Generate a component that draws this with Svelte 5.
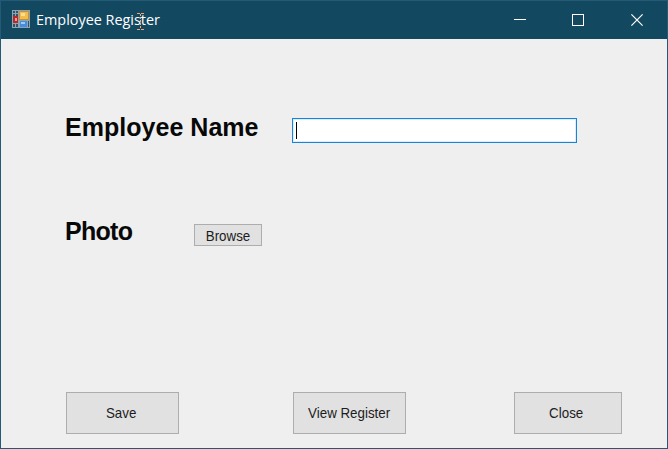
<script>
  let name = $state('');
</script>

<div class="window">
  <header>
    <svg class="appicon" width="18" height="18" viewBox="0 0 18 18" shape-rendering="crispEdges">
      <rect width="18" height="18" fill="#8fa3b0" />
      <rect x="1" y="1" width="5" height="5" fill="#31536b" />
      <rect x="3" y="1" width="1" height="5" fill="#8fa3b0" />
      <rect x="1" y="3" width="5" height="1" fill="#8fa3b0" />
      <rect x="7" y="1" width="10" height="9" fill="#c98f35" />
      <rect x="8" y="2" width="8" height="7" fill="#f3bd4c" />
      <rect x="9" y="3" width="4" height="3" fill="#fbdc94" />
      <rect x="1" y="6" width="5" height="7" fill="#b32a2c" />
      <rect x="3" y="8" width="2" height="3" fill="#ee9a92" />
      <rect x="1" y="14" width="5" height="3" fill="#31536b" />
      <rect x="3" y="14" width="1" height="3" fill="#8fa3b0" />
      <rect x="8" y="11" width="7" height="6" fill="#418fe3" />
      <rect x="9" y="12" width="4" height="2" fill="#9ccbfa" />
      <rect x="16" y="11" width="1" height="6" fill="#31536b" />
    </svg>
    <div class="title">
      <span>Employee Register</span>
      <svg class="cursor" width="9" height="17" viewBox="0 0 9 17" fill="none">
        <g stroke="#f0a878">
          <path d="M1 .5H4M5 .5H8M1 16.5H4M5 16.5H8" />
          <path d="M4.5 1V16" stroke-dasharray="2 1" />
        </g>
      </svg>
    </div>
    <div class="controls">
      <svg width="12" height="12" viewBox="0 0 12 12" stroke="#fff"><path d="M0 5.5H12" /></svg>
      <svg width="12" height="12" viewBox="0 0 12 12" stroke="#fff" fill="none"><rect x=".5" y=".5" width="11" height="11" /></svg>
      <svg width="12" height="12" viewBox="0 0 12 12" stroke="#fff" stroke-width="1.2"><path d="M.4 .4L11.6 11.6M11.6 .4L.4 11.6" /></svg>
    </div>
  </header>
  <main>
    <div class="row name">
      <label for="employee">Employee Name</label>
      <div class="field">
        <i class="caret"></i>
        <input id="employee" bind:value={name} />
      </div>
    </div>
    <div class="row photo">
      <span class="label">Photo</span>
      <button class="browse"><span>Browse</span></button>
    </div>
    <div class="row actions">
      <button class="save"><span>Save</span></button>
      <button class="view"><span>View Register</span></button>
      <button class="close"><span>Close</span></button>
    </div>
  </main>
</div>

<style>
  :global(body) { margin: 0; overflow: hidden; }
  .window {
    width: 668px; height: 449px; box-sizing: border-box;
    border: 1px solid #245a75; background: #efefef;
    display: flex; flex-direction: column;
    font-family: "Liberation Sans", Arial, sans-serif;
  }
  header {
    height: 38px; flex: none; box-sizing: border-box; background: #134861;
    display: flex; align-items: center; padding: 0 24px 0 11px;
  }
  .appicon { display: block; margin-top: -2px; }
  .title {
    position: relative; margin-left: 6px; height: 38px; line-height: 37px;
    font-family: "Open Sans", "Noto Sans", sans-serif; font-size: 15px; color: #fff; white-space: nowrap;
  }
  .title span { display: inline-block; transform: scaleX(.96); transform-origin: left; }
  .cursor { position: absolute; left: 100px; top: 12px; }
  .controls { margin-left: auto; display: flex; gap: 47px; }
  .controls svg { display: block; }
  .controls svg:first-child { margin-right: -1px; }
  main { flex: 1; display: flex; flex-direction: column; }
  .row { display: flex; align-items: flex-start; }
  .name { padding: 79px 0 0 64px; height: 25px; }
  label, .label { font-weight: bold; font-size: 25px; line-height: 28px; color: #080808; white-space: nowrap; }
  label { width: 227px; margin-top: -5px; letter-spacing: .03px; }
  .field {
    width: 285px; height: 25px; box-sizing: border-box; display: flex; align-items: flex-start;
    border: 1px solid #1684d8; background: #fff; padding: 3px;
    box-shadow: inset 0 0 0 1px #dceefa;
  }
  .caret { width: 1px; height: 17px; background: #000; flex: none; }
  input { flex: 1; min-width: 0; height: 17px; padding: 0; border: 0; outline: 0; background: transparent; }
  .photo { padding: 81px 0 0 64px; height: 22px; }
  .label { width: 129px; margin-top: -7px; letter-spacing: -.7px; }
  button {
    box-sizing: border-box; border: 1px solid #adadad; border-radius: 0; background: #e1e1e1; padding: 0;
    display: flex; align-items: center; justify-content: center;
    font: 15px "Liberation Sans", Arial, sans-serif; color: #1c1c22;
  }
  button span { display: block; white-space: nowrap; transform: scaleX(.89); margin-top: -1px; }
  .browse { width: 68px; height: 22px; }
  .browse span { margin: 1px 0 0; }
  .actions { margin-top: auto; padding: 0 45px 14px 65px; }
  .actions button { height: 42px; }
  .save { width: 113px; }
  .save span { margin-left: -2px; }
  .view { width: 113px; margin-left: 114px; }
  .close { width: 108px; margin-left: auto; }
  .close span { margin-left: -3px; }
</style>
